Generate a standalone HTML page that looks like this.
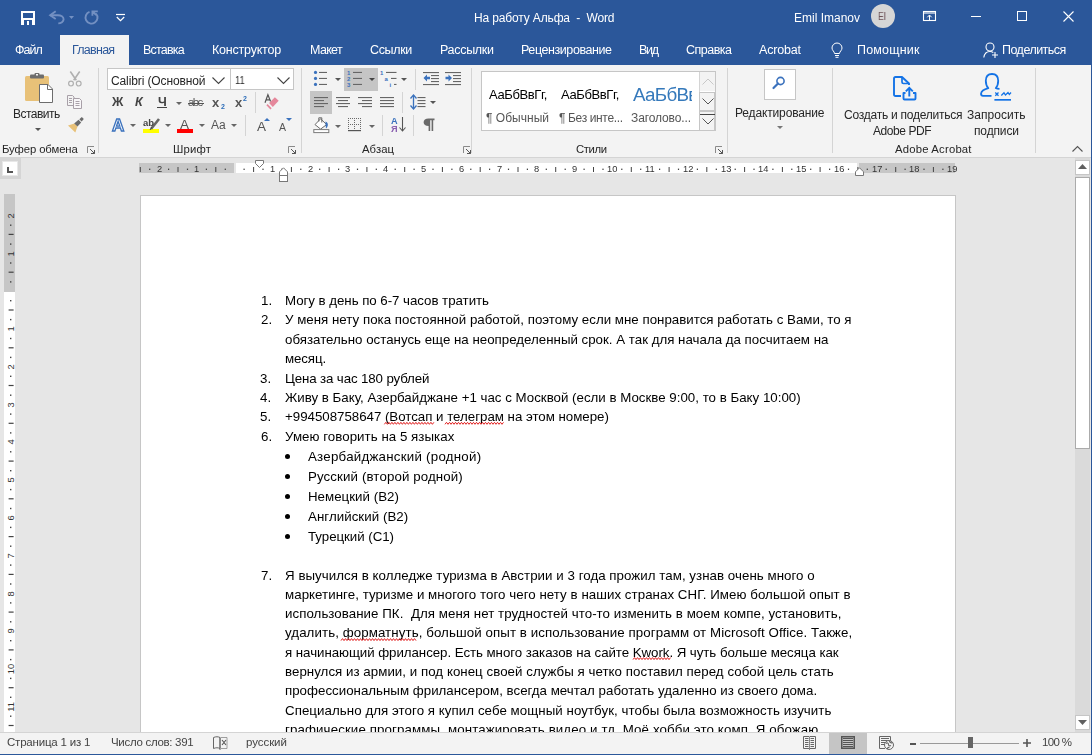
<!DOCTYPE html>
<html><head><meta charset="utf-8"><style>
html,body{margin:0;padding:0;}
body{width:1092px;height:755px;position:relative;overflow:hidden;background:#e6e6e6;font-family:"Liberation Sans", sans-serif;}
.t{position:absolute;white-space:pre;line-height:1;will-change:transform;}
svg{overflow:visible}
</style></head><body>

<div style="position:absolute;left:0px;top:0px;width:1092px;height:65px;background:#2b579a;"></div>
<div style="position:absolute;left:0px;top:65px;width:1092px;height:92px;background:#f3f3f3;"></div>
<div style="position:absolute;left:0px;top:157px;width:1092px;height:1px;background:#d4d4d4;"></div>
<div style="position:absolute;left:0px;top:732px;width:1092px;height:22px;background:#f3f3f3;z-index:10;"></div>
<div style="position:absolute;left:0px;top:732px;width:1092px;height:1px;background:#d4d4d4;z-index:10;"></div>
<div style="position:absolute;left:0px;top:754px;width:1092px;height:1px;background:#2b579a;z-index:10;"></div>
<div style="position:absolute;left:1091px;top:0px;width:1px;height:755px;background:#2b579a;z-index:10;"></div>
<svg style="position:absolute;left:21px;top:11px;z-index:4" width="14" height="14" viewBox="0 0 14 14"><path d="M0.5 0.5h13v13h-13z" fill="none" stroke="#fff" stroke-width="1"/><rect x="0" y="0" width="14" height="14" fill="#fff"/><rect x="2" y="2" width="10" height="5" fill="#2b579a"/><rect x="3" y="9" width="8" height="5" fill="#2b579a"/><rect x="6" y="10" width="2" height="4" fill="#fff"/></svg>
<svg style="position:absolute;left:48px;top:9px;z-index:4" width="18" height="17" viewBox="0 0 18 17"><path d="M7.7 2.3 L2.2 6.2 L7.7 10" fill="none" stroke="#7390c2" stroke-width="1.9"/><path d="M2.2 6.2 H9.8 C13 6.2 15.6 8 15.6 10.3 C15.6 12.5 13 14.4 10.3 14.4" fill="none" stroke="#7390c2" stroke-width="1.9"/></svg>
<svg style="position:absolute;left:69px;top:16px;z-index:4" width="5" height="3" viewBox="0 0 5 3"><path d="M0 0H5L2.5 3z" fill="#7390c2"/></svg>
<svg style="position:absolute;left:84px;top:10px;z-index:4" width="16" height="16" viewBox="0 0 16 16"><path d="M5.5 1.9 A6 6 0 1 0 12 3.6" fill="none" stroke="#7390c2" stroke-width="1.9"/><path d="M8.4 5.8 V1.3 H13.8 M8.6 1.5 L12.2 5" fill="none" stroke="#7390c2" stroke-width="1.8"/></svg>
<svg style="position:absolute;left:116px;top:13px;z-index:4" width="9" height="9" viewBox="0 0 9 9"><path d="M0 1.5H9" stroke="#fff" stroke-width="1.2"/><path d="M0.8 4 L4.5 7.7 L8.2 4" fill="none" stroke="#fff" stroke-width="1.2"/></svg>
<div style="position:absolute;left:871px;top:4px;width:24px;height:24px;border-radius:50%;background:#d6d6d6"></div>
<svg style="position:absolute;left:923px;top:11px;z-index:4" width="13" height="10" viewBox="0 0 13 10"><rect x="0.5" y="0.5" width="12" height="9" fill="none" stroke="#fff" stroke-width="1.1"/><path d="M0.5 2H12.5" stroke="#fff" stroke-width="1.1"/><path d="M6.5 9.5V4.2 M4.3 6.3 L6.5 4 L8.7 6.3" fill="none" stroke="#fff" stroke-width="1"/></svg>
<div style="position:absolute;left:971px;top:16px;width:10px;height:1px;background:#fff;"></div>
<div style="position:absolute;left:1017px;top:11px;width:8px;height:8px;border:1px solid #fff"></div>
<svg style="position:absolute;left:1063px;top:11px;z-index:4" width="11" height="11" viewBox="0 0 11 11"><path d="M0.5 0.5L10.5 10.5M10.5 0.5L0.5 10.5" stroke="#fff" stroke-width="1.1"/></svg>
<div style="position:absolute;left:60px;top:35px;width:69px;height:30px;background:#f3f3f3;"></div>
<svg style="position:absolute;left:831px;top:43px;z-index:4" width="12" height="15" viewBox="0 0 12 15"><path d="M3.5 10.5 C3.5 8.5 1 7.5 1 5 A5 5 0 0 1 11 5 C11 7.5 8.5 8.5 8.5 10.5 Z" fill="none" stroke="#fff" stroke-width="1"/><path d="M4 12.5H8 M4.5 14.3H7.5" stroke="#fff" stroke-width="1"/></svg>
<svg style="position:absolute;left:983px;top:42px;z-index:4" width="16" height="16" viewBox="0 0 16 16"><circle cx="7" cy="5" r="4" fill="none" stroke="#fff" stroke-width="1.1"/><path d="M0.8 15.5 C1.5 11 4 9.5 7 9.5 C8.5 9.5 9.5 10 10.3 10.5" fill="none" stroke="#fff" stroke-width="1.1"/><path d="M9 13H15 M12 10V16" stroke="#fff" stroke-width="1.1"/></svg>
<svg style="position:absolute;left:25px;top:73px;z-index:4" width="29" height="31" viewBox="0 0 29 31"><rect x="0" y="3" width="24" height="25" rx="1.5" fill="#e8c178"/><rect x="5" y="1.5" width="14" height="4" rx="1" fill="#6d6d6d"/><rect x="9.5" y="0" width="5" height="3" rx="1" fill="#6d6d6d"/><rect x="11" y="1" width="2" height="1.5" fill="#f3f3f3"/><path d="M14.5 11.5 H23 L27.5 16 V29.5 H14.5 Z" fill="#fff" stroke="#6d6d6d" stroke-width="1"/><path d="M22.5 11.5 V16.5 H27.5" fill="none" stroke="#6d6d6d" stroke-width="1"/></svg>
<svg style="position:absolute;left:35px;top:128px;z-index:4" width="6" height="3" viewBox="0 0 6 3"><path d="M0 0H6L3 3z" fill="#555"/></svg>
<svg style="position:absolute;left:68px;top:71px;z-index:4" width="14" height="16" viewBox="0 0 14 16"><path d="M2.3 0.5 L8.3 9.3 M11.7 0.5 L5.7 9.3" stroke="#b0b0b0" stroke-width="1.6"/><circle cx="3" cy="12.6" r="2.4" fill="none" stroke="#b0b0b0" stroke-width="1.2"/><circle cx="10.7" cy="12.6" r="2.4" fill="none" stroke="#b0b0b0" stroke-width="1.2"/></svg>
<svg style="position:absolute;left:67px;top:95px;z-index:4" width="16" height="14" viewBox="0 0 16 14"><path d="M0.5 0.5H5.5L7 2V10.5H0.5Z" fill="#f3f3f3" stroke="#a8a0a8" stroke-width="1"/><path d="M2 3.5H5M2 5.5H5M2 7.5H5" stroke="#a8a0a8" stroke-width="1"/><path d="M6.5 3.5H12.5L14.5 5.5V13.5H6.5Z" fill="#f8f6f8" stroke="#a8a0a8" stroke-width="1"/><path d="M8.5 6.5H12.5M8.5 8.5H12.5M8.5 10.5H12.5" stroke="#a8a0a8" stroke-width="1"/></svg>
<svg style="position:absolute;left:67px;top:117px;z-index:4" width="17" height="16" viewBox="0 0 17 16"><path d="M1 8.6 L7.5 6.5 L10.5 9.5 L8.3 15.5Z" fill="#e8c178"/><path d="M7.2 6.5 L11.5 2.8 L14.2 5.6 L10.5 9.5Z" fill="#6b6b6b"/><path d="M12.3 2.3 L14.8 0 L16.8 2 L14.6 4.6Z" fill="#6b6b6b"/></svg>
<svg style="position:absolute;left:87px;top:146px;z-index:4" width="8" height="8" viewBox="0 0 8 8"><path d="M0.5 7V0.5H7" fill="none" stroke="#8a8a8a" stroke-width="1"/><path d="M3 3L7.5 7.5M4 7.5H7.5V4" fill="none" stroke="#555" stroke-width="1"/></svg>
<div style="position:absolute;left:98px;top:68px;width:1px;height:85px;background:#d4d4d4;"></div>
<div style="position:absolute;left:107px;top:68px;width:122px;height:20px;border:1px solid #c6c6c6;background:#fff"></div>
<div style="position:absolute;left:230px;top:68px;width:62px;height:20px;border:1px solid #c6c6c6;background:#fff"></div>
<svg style="position:absolute;left:212px;top:77px;z-index:4" width="13" height="7" viewBox="0 0 13 7"><path d="M0.5 0.5L6.5 6.5L12.5 0.5" fill="none" stroke="#444" stroke-width="1.1"/></svg>
<svg style="position:absolute;left:277px;top:77px;z-index:4" width="13" height="7" viewBox="0 0 13 7"><path d="M0.5 0.5L6.5 6.5L12.5 0.5" fill="none" stroke="#444" stroke-width="1.1"/></svg>
<div style="position:absolute;left:157px;top:107px;width:10px;height:1.3px;background:#444;"></div>
<svg style="position:absolute;left:175.5px;top:101.5px;z-index:4" width="6" height="3" viewBox="0 0 6 3"><path d="M0 0H6L3 3z" fill="#666"/></svg>
<div style="position:absolute;left:188px;top:102.5px;width:16px;height:1px;background:#555;"></div>
<div style="position:absolute;left:255px;top:92px;width:1px;height:21px;background:#d4d4d4;"></div>
<svg style="position:absolute;left:264px;top:94px;z-index:4" width="16" height="16" viewBox="0 0 16 16"><path d="M1 8.8 L3.9 0.8 L6.6 7.5 M2.1 5.8 H6.3" fill="none" stroke="#555" stroke-width="1.2"/><path d="M5.1 9.1 L10.9 3.2 L14.7 6.7 L8.8 12.9Z" fill="#e5879b"/><path d="M2.4 11.2 L3.5 10 L7.7 14.3 L6.4 15.6Z" fill="#e5879b"/></svg>
<svg style="position:absolute;left:129.7px;top:124px;z-index:4" width="6" height="3" viewBox="0 0 6 3"><path d="M0 0H6L3 3z" fill="#666"/></svg>
<svg style="position:absolute;left:147px;top:117px;z-index:4" width="13" height="13" viewBox="0 0 13 13"><path d="M4 12 L12 2" stroke="#666" stroke-width="2.6"/><path d="M3 13 L5 10" stroke="#444" stroke-width="1"/></svg>
<div style="position:absolute;left:143px;top:129.2px;width:16px;height:3.7px;background:#ffff00;"></div>
<svg style="position:absolute;left:164.8px;top:124px;z-index:4" width="6" height="3" viewBox="0 0 6 3"><path d="M0 0H6L3 3z" fill="#666"/></svg>
<div style="position:absolute;left:176.7px;top:129.2px;width:16.5px;height:3.8px;background:#ff0000;"></div>
<svg style="position:absolute;left:199.2px;top:124px;z-index:4" width="6" height="3" viewBox="0 0 6 3"><path d="M0 0H6L3 3z" fill="#666"/></svg>
<svg style="position:absolute;left:230.8px;top:124px;z-index:4" width="6" height="3" viewBox="0 0 6 3"><path d="M0 0H6L3 3z" fill="#666"/></svg>
<div style="position:absolute;left:245px;top:115px;width:1px;height:21px;background:#d4d4d4;"></div>
<svg style="position:absolute;left:264px;top:118px;z-index:4" width="6" height="3" viewBox="0 0 6 3"><path d="M0 3H6L3 0z" fill="#3b72bd"/></svg>
<svg style="position:absolute;left:285.5px;top:118px;z-index:4" width="6" height="3" viewBox="0 0 6 3"><path d="M0 0H6L3 3z" fill="#3b72bd"/></svg>
<svg style="position:absolute;left:288px;top:146px;z-index:4" width="8" height="8" viewBox="0 0 8 8"><path d="M0.5 7V0.5H7" fill="none" stroke="#8a8a8a" stroke-width="1"/><path d="M3 3L7.5 7.5M4 7.5H7.5V4" fill="none" stroke="#555" stroke-width="1"/></svg>
<div style="position:absolute;left:301px;top:68px;width:1px;height:85px;background:#d4d4d4;"></div>
<div style="position:absolute;left:344px;top:68px;width:34px;height:23px;background:#c5c5c5;"></div>
<div style="position:absolute;left:310px;top:91px;width:22px;height:23px;background:#c5c5c5;"></div>
<svg style="position:absolute;left:313px;top:70px;z-index:4" width="15" height="17" viewBox="0 0 15 17"><circle cx="2.5" cy="2.4" r="1.6" fill="#3b72bd"/><rect x="6" y="1.9" width="8" height="1.1" fill="#666"/><circle cx="2.5" cy="8.4" r="1.6" fill="#3b72bd"/><rect x="6" y="7.9" width="8" height="1.1" fill="#666"/><circle cx="2.5" cy="14.4" r="1.6" fill="#3b72bd"/><rect x="6" y="13.9" width="8" height="1.1" fill="#666"/></svg>
<svg style="position:absolute;left:335px;top:78px;z-index:4" width="6" height="3" viewBox="0 0 6 3"><path d="M0 0H6L3 3z" fill="#555"/></svg>
<svg style="position:absolute;left:347px;top:70px;z-index:4" width="16" height="17" viewBox="0 0 16 17"><rect x="6" y="1.9" width="9" height="1.1" fill="#666"/><rect x="6" y="7.9" width="9" height="1.1" fill="#666"/><rect x="6" y="13.9" width="9" height="1.1" fill="#666"/><text x="0" y="5" font-family="Liberation Sans" font-weight="bold" font-size="6" fill="#3b72bd">1</text><text x="0" y="11" font-family="Liberation Sans" font-weight="bold" font-size="6" fill="#3b72bd">2</text><text x="0" y="17" font-family="Liberation Sans" font-weight="bold" font-size="6" fill="#3b72bd">3</text></svg>
<svg style="position:absolute;left:369px;top:78px;z-index:4" width="6" height="3" viewBox="0 0 6 3"><path d="M0 0H6L3 3z" fill="#444"/></svg>
<svg style="position:absolute;left:380px;top:70px;z-index:4" width="18" height="17" viewBox="0 0 18 17"><rect x="6" y="1.9" width="10.5" height="1.1" fill="#666"/><rect x="11" y="7.9" width="5.5" height="1.1" fill="#666"/><rect x="14" y="13.9" width="2.5" height="1.1" fill="#666"/><text x="0" y="5" font-family="Liberation Sans" font-weight="bold" font-size="6" fill="#3b72bd">1</text><text x="4.5" y="11" font-family="Liberation Sans" font-weight="bold" font-size="6" fill="#3b72bd">a</text><text x="9.5" y="17" font-family="Liberation Sans" font-weight="bold" font-size="6" fill="#3b72bd">i</text></svg>
<svg style="position:absolute;left:401px;top:78px;z-index:4" width="6" height="3" viewBox="0 0 6 3"><path d="M0 0H6L3 3z" fill="#555"/></svg>
<div style="position:absolute;left:415px;top:69px;width:1px;height:21px;background:#d4d4d4;"></div>
<svg style="position:absolute;left:423px;top:72px;z-index:4" width="17" height="13" viewBox="0 0 17 13"><rect x="0" y="0" width="16" height="1.1" fill="#666"/><rect x="8" y="3" width="8" height="1.1" fill="#666"/><rect x="8" y="6" width="8" height="1.1" fill="#666"/><rect x="8" y="9" width="8" height="1.1" fill="#666"/><rect x="0" y="12" width="16" height="1.1" fill="#666"/><path d="M0.5 6 L4 2.5 V4.8 H7 V7.2 H4 V9.5Z" fill="#3b72bd"/></svg>
<svg style="position:absolute;left:445px;top:72px;z-index:4" width="17" height="13" viewBox="0 0 17 13"><rect x="0" y="0" width="16" height="1.1" fill="#666"/><rect x="8" y="3" width="8" height="1.1" fill="#666"/><rect x="8" y="6" width="8" height="1.1" fill="#666"/><rect x="8" y="9" width="8" height="1.1" fill="#666"/><rect x="0" y="12" width="16" height="1.1" fill="#666"/><path d="M7 6 L3.5 2.5 V4.8 H0.5 V7.2 H3.5 V9.5Z" fill="#3b72bd"/></svg>
<svg style="position:absolute;left:314px;top:97px;z-index:4" width="14" height="11" viewBox="0 0 14 11"><rect x="0" y="0" width="14" height="1.1" fill="#666"/><rect x="0" y="3" width="10" height="1.1" fill="#666"/><rect x="0" y="6" width="14" height="1.1" fill="#666"/><rect x="0" y="9" width="10" height="1.1" fill="#666"/></svg>
<svg style="position:absolute;left:336px;top:97px;z-index:4" width="14" height="11" viewBox="0 0 14 11"><rect x="0.0" y="0" width="14" height="1.1" fill="#666"/><rect x="2.0" y="3" width="10" height="1.1" fill="#666"/><rect x="0.0" y="6" width="14" height="1.1" fill="#666"/><rect x="2.0" y="9" width="10" height="1.1" fill="#666"/></svg>
<svg style="position:absolute;left:358px;top:97px;z-index:4" width="14" height="11" viewBox="0 0 14 11"><rect x="0" y="0" width="14" height="1.1" fill="#666"/><rect x="4" y="3" width="10" height="1.1" fill="#666"/><rect x="0" y="6" width="14" height="1.1" fill="#666"/><rect x="4" y="9" width="10" height="1.1" fill="#666"/></svg>
<svg style="position:absolute;left:380px;top:97px;z-index:4" width="14" height="11" viewBox="0 0 14 11"><rect x="0" y="0" width="14" height="1.1" fill="#666"/><rect x="0" y="3" width="14" height="1.1" fill="#666"/><rect x="0" y="6" width="14" height="1.1" fill="#666"/><rect x="0" y="9" width="14" height="1.1" fill="#666"/></svg>
<div style="position:absolute;left:402px;top:92px;width:1px;height:21px;background:#d4d4d4;"></div>
<svg style="position:absolute;left:410px;top:94px;z-index:4" width="16" height="16" viewBox="0 0 16 16"><path d="M3.5 1.5V14.5" stroke="#3b72bd" stroke-width="1.3"/><path d="M0.5 4.5L3.5 1L6.5 4.5M0.5 11.5L3.5 15L6.5 11.5" fill="none" stroke="#3b72bd" stroke-width="1.3"/><rect x="7.5" y="3" width="8" height="1.1" fill="#666"/><rect x="7.5" y="6" width="8" height="1.1" fill="#666"/><rect x="7.5" y="9" width="8" height="1.1" fill="#666"/><rect x="7.5" y="12" width="8" height="1.1" fill="#666"/></svg>
<svg style="position:absolute;left:430px;top:101px;z-index:4" width="6" height="3" viewBox="0 0 6 3"><path d="M0 0H6L3 3z" fill="#555"/></svg>
<svg style="position:absolute;left:313px;top:117px;z-index:4" width="17" height="16" viewBox="0 0 17 16"><path d="M2 7.6 L7.6 1.8 L13.6 7.6 L7.6 12.1Z" fill="#fff" stroke="#6a6a6a" stroke-width="1"/><path d="M5.8 4.5 V0.8 H8.8 V5.5" fill="none" stroke="#6a6a6a" stroke-width="1"/><path d="M12.5 4.5 C15 5.5 16 8.5 13 11.5 L12.5 7.5Z" fill="#3b72bd"/><rect x="0.8" y="12.6" width="15" height="3" fill="#fff" stroke="#7a7a7a" stroke-width="1"/></svg>
<svg style="position:absolute;left:334.7px;top:124.5px;z-index:4" width="6" height="3" viewBox="0 0 6 3"><path d="M0 0H6L3 3z" fill="#666"/></svg>
<svg style="position:absolute;left:348px;top:118px;z-index:4" width="14" height="14" viewBox="0 0 14 14"><rect x="0" y="0" width="1" height="1" fill="#6a6a6a"/><rect x="2" y="0" width="1" height="1" fill="#6a6a6a"/><rect x="4" y="0" width="1" height="1" fill="#6a6a6a"/><rect x="6" y="0" width="1" height="1" fill="#6a6a6a"/><rect x="8" y="0" width="1" height="1" fill="#6a6a6a"/><rect x="10" y="0" width="1" height="1" fill="#6a6a6a"/><rect x="12" y="0" width="1" height="1" fill="#6a6a6a"/><rect x="0" y="2" width="1" height="1" fill="#6a6a6a"/><rect x="6" y="2" width="1" height="1" fill="#6a6a6a"/><rect x="12" y="2" width="1" height="1" fill="#6a6a6a"/><rect x="0" y="4" width="1" height="1" fill="#6a6a6a"/><rect x="6" y="4" width="1" height="1" fill="#6a6a6a"/><rect x="12" y="4" width="1" height="1" fill="#6a6a6a"/><rect x="0" y="6" width="1" height="1" fill="#6a6a6a"/><rect x="2" y="6" width="1" height="1" fill="#6a6a6a"/><rect x="4" y="6" width="1" height="1" fill="#6a6a6a"/><rect x="6" y="6" width="1" height="1" fill="#6a6a6a"/><rect x="8" y="6" width="1" height="1" fill="#6a6a6a"/><rect x="10" y="6" width="1" height="1" fill="#6a6a6a"/><rect x="12" y="6" width="1" height="1" fill="#6a6a6a"/><rect x="0" y="8" width="1" height="1" fill="#6a6a6a"/><rect x="6" y="8" width="1" height="1" fill="#6a6a6a"/><rect x="12" y="8" width="1" height="1" fill="#6a6a6a"/><rect x="0" y="10" width="1" height="1" fill="#6a6a6a"/><rect x="6" y="10" width="1" height="1" fill="#6a6a6a"/><rect x="12" y="10" width="1" height="1" fill="#6a6a6a"/><rect x="0" y="12" width="13" height="1.2" fill="#555"/></svg>
<svg style="position:absolute;left:368.7px;top:124.5px;z-index:4" width="6" height="3" viewBox="0 0 6 3"><path d="M0 0H6L3 3z" fill="#666"/></svg>
<div style="position:absolute;left:382px;top:115px;width:1px;height:21px;background:#d4d4d4;"></div>
<svg style="position:absolute;left:399px;top:117px;z-index:4" width="7" height="15" viewBox="0 0 7 15"><path d="M3.5 0V14" stroke="#555" stroke-width="1.1"/><path d="M0.5 10.5L3.5 14L6.5 10.5" fill="none" stroke="#555" stroke-width="1.1"/></svg>
<div style="position:absolute;left:413px;top:115px;width:1px;height:21px;background:#d4d4d4;"></div>
<svg style="position:absolute;left:423px;top:118px;z-index:4" width="12" height="13" viewBox="0 0 12 13"><path d="M5.5 0.5 H11.5 V2.2 H10.2 V13 H8.6 V2.2 H7.2 V13 H5.6 V8 C2.5 8 0.6 6.4 0.6 4.2 C0.6 1.9 2.5 0.5 5.5 0.5Z" fill="#6a6a6a"/></svg>
<svg style="position:absolute;left:463px;top:146px;z-index:4" width="8" height="8" viewBox="0 0 8 8"><path d="M0.5 7V0.5H7" fill="none" stroke="#8a8a8a" stroke-width="1"/><path d="M3 3L7.5 7.5M4 7.5H7.5V4" fill="none" stroke="#555" stroke-width="1"/></svg>
<div style="position:absolute;left:471px;top:68px;width:1px;height:85px;background:#d4d4d4;"></div>
<div style="position:absolute;left:481px;top:71px;width:233px;height:58px;border:1px solid #c6c6c6;background:#fff"></div>
<div style="position:absolute;left:699px;top:72px;width:1px;height:58px;background:#d4d4d4;"></div>
<div style="position:absolute;left:699px;top:92px;width:14px;height:17px;border:1px solid #c6c6c6;background:#f3f3f3"></div>
<div style="position:absolute;left:699px;top:111px;width:14px;height:18px;border:1px solid #c6c6c6;background:#f3f3f3"></div>
<div style="position:absolute;left:700px;top:72px;width:15px;height:19px;background:#f3f3f3;"></div>
<svg style="position:absolute;left:702px;top:78px;z-index:4" width="12" height="7" viewBox="0 0 12 7"><path d="M0.5 6.5L6 1L11.5 6.5" fill="none" stroke="#c8c8c8" stroke-width="1"/></svg>
<svg style="position:absolute;left:702px;top:98px;z-index:4" width="12" height="7" viewBox="0 0 12 7"><path d="M0.5 0.5L6 6L11.5 0.5" fill="none" stroke="#555" stroke-width="1"/></svg>
<div style="position:absolute;left:700px;top:114px;width:15px;height:1px;background:#444;"></div>
<svg style="position:absolute;left:702px;top:118px;z-index:4" width="12" height="7" viewBox="0 0 12 7"><path d="M0.5 0.5L6 6L11.5 0.5" fill="none" stroke="#555" stroke-width="1"/></svg>
<svg style="position:absolute;left:715px;top:146px;z-index:4" width="8" height="8" viewBox="0 0 8 8"><path d="M0.5 7V0.5H7" fill="none" stroke="#8a8a8a" stroke-width="1"/><path d="M3 3L7.5 7.5M4 7.5H7.5V4" fill="none" stroke="#555" stroke-width="1"/></svg>
<div style="position:absolute;left:727px;top:68px;width:1px;height:85px;background:#d4d4d4;"></div>
<div style="position:absolute;left:764px;top:69px;width:30px;height:29px;border:1px solid #c6c6c6;background:#fff"></div>
<svg style="position:absolute;left:772px;top:76px;z-index:4" width="14" height="13" viewBox="0 0 14 13"><circle cx="8.5" cy="5" r="3.6" fill="none" stroke="#3b72bd" stroke-width="1.6"/><path d="M6 7.5L1.5 12" stroke="#3b72bd" stroke-width="2.2" stroke-linecap="round"/></svg>
<svg style="position:absolute;left:777px;top:126px;z-index:4" width="6" height="3" viewBox="0 0 6 3"><path d="M0 0H6L3 3z" fill="#777"/></svg>
<div style="position:absolute;left:832px;top:68px;width:1px;height:85px;background:#d4d4d4;"></div>
<svg style="position:absolute;left:893px;top:76px;z-index:4" width="24" height="25" viewBox="0 0 24 25"><path d="M8 20 H2.5 Q1 20 1 18.5 V2.5 Q1 1 2.5 1 H9 L16 7.5 V9" fill="none" stroke="#1473e6" stroke-width="1.9" stroke-linejoin="round"/><path d="M9 1 V6 Q9 7.5 10.5 7.5 H16" fill="none" stroke="#1473e6" stroke-width="1.7"/><path d="M12.5 17 H10.5 V22.5 Q10.5 23.5 11.5 23.5 H21.5 Q22.5 23.5 22.5 22.5 V17 H20" fill="none" stroke="#1473e6" stroke-width="1.9" stroke-linejoin="round"/><path d="M16.3 20.5 V12.5 M12.8 15.3 L16.3 11.8 L19.8 15.3" fill="none" stroke="#1473e6" stroke-width="1.9"/></svg>
<svg style="position:absolute;left:980px;top:73px;z-index:4" width="33" height="28" viewBox="0 0 33 28"><path d="M11.5 22.8 H3 Q1 22.8 1 20.8 Q1.5 17 8.3 15.2 Q5.8 12.5 5.8 7.8 Q5.8 1 12 1 Q18.2 1 18.2 7.8 Q18.2 12.5 15.8 15 Q17 15.8 19.5 15.8" fill="none" stroke="#1473e6" stroke-width="1.8" stroke-linejoin="round"/><path d="M15.3 19.5L18.5 22.7M18.5 19.5L15.3 22.7" stroke="#1473e6" stroke-width="1.3"/><path d="M21.3 22.5 L24 19.8 L25.5 22 L28 19.5 L29.3 21.5 L31 19.5" fill="none" stroke="#1473e6" stroke-width="1.3"/><rect x="14.4" y="26" width="16.6" height="1.7" fill="#1473e6"/></svg>
<div style="position:absolute;left:1035px;top:68px;width:1px;height:85px;background:#d4d4d4;"></div>
<svg style="position:absolute;left:1072px;top:146px;z-index:4" width="11" height="6" viewBox="0 0 11 6"><path d="M0.5 5.5L5.5 0.5L10.5 5.5" fill="none" stroke="#555" stroke-width="1.1"/></svg>
<div style="position:absolute;left:0px;top:158px;width:21px;height:21px;background:#d5d5d5;"></div>
<div style="position:absolute;left:2px;top:161px;width:14px;height:13px;background:#fff;border:1px solid #e8e8e8"></div>
<svg style="position:absolute;left:7px;top:167px;z-index:4" width="6" height="6" viewBox="0 0 6 6"><path d="M1 0V5H6" fill="none" stroke="#555" stroke-width="2"/></svg>
<div style="position:absolute;left:139px;top:163px;width:95px;height:10px;background:#c6c6c6;"></div>
<div style="position:absolute;left:236px;top:163px;width:621px;height:10px;background:#ffffff;"></div>
<div style="position:absolute;left:859px;top:163px;width:96px;height:10px;background:#c6c6c6;"></div>
<svg style="position:absolute;left:0;top:0;z-index:4" width="1092" height="200"><rect x="139.8" y="167" width="1" height="5" fill="#444"/><rect x="149.1" y="168.6" width="1.2" height="1.4" fill="#444"/><rect x="168.0" y="168.6" width="1.2" height="1.4" fill="#444"/><rect x="177.5" y="167" width="1" height="5" fill="#444"/><rect x="186.9" y="168.6" width="1.2" height="1.4" fill="#444"/><rect x="205.8" y="168.6" width="1.2" height="1.4" fill="#444"/><rect x="215.3" y="167" width="1" height="5" fill="#444"/><rect x="224.7" y="168.6" width="1.2" height="1.4" fill="#444"/><rect x="243.5" y="168.6" width="1.2" height="1.4" fill="#444"/><rect x="253.1" y="167" width="1" height="5" fill="#444"/><rect x="262.4" y="168.6" width="1.2" height="1.4" fill="#444"/><rect x="281.3" y="168.6" width="1.2" height="1.4" fill="#444"/><rect x="290.9" y="167" width="1" height="5" fill="#444"/><rect x="300.2" y="168.6" width="1.2" height="1.4" fill="#444"/><rect x="319.1" y="168.6" width="1.2" height="1.4" fill="#444"/><rect x="328.6" y="167" width="1" height="5" fill="#444"/><rect x="338.0" y="168.6" width="1.2" height="1.4" fill="#444"/><rect x="356.9" y="168.6" width="1.2" height="1.4" fill="#444"/><rect x="366.4" y="167" width="1" height="5" fill="#444"/><rect x="375.7" y="168.6" width="1.2" height="1.4" fill="#444"/><rect x="394.6" y="168.6" width="1.2" height="1.4" fill="#444"/><rect x="404.2" y="167" width="1" height="5" fill="#444"/><rect x="413.5" y="168.6" width="1.2" height="1.4" fill="#444"/><rect x="432.4" y="168.6" width="1.2" height="1.4" fill="#444"/><rect x="441.9" y="167" width="1" height="5" fill="#444"/><rect x="451.3" y="168.6" width="1.2" height="1.4" fill="#444"/><rect x="470.2" y="168.6" width="1.2" height="1.4" fill="#444"/><rect x="479.7" y="167" width="1" height="5" fill="#444"/><rect x="489.0" y="168.6" width="1.2" height="1.4" fill="#444"/><rect x="507.9" y="168.6" width="1.2" height="1.4" fill="#444"/><rect x="517.5" y="167" width="1" height="5" fill="#444"/><rect x="526.8" y="168.6" width="1.2" height="1.4" fill="#444"/><rect x="545.7" y="168.6" width="1.2" height="1.4" fill="#444"/><rect x="555.2" y="167" width="1" height="5" fill="#444"/><rect x="564.6" y="168.6" width="1.2" height="1.4" fill="#444"/><rect x="583.5" y="168.6" width="1.2" height="1.4" fill="#444"/><rect x="593.0" y="167" width="1" height="5" fill="#444"/><rect x="602.4" y="168.6" width="1.2" height="1.4" fill="#444"/><rect x="621.2" y="168.6" width="1.2" height="1.4" fill="#444"/><rect x="630.8" y="167" width="1" height="5" fill="#444"/><rect x="640.1" y="168.6" width="1.2" height="1.4" fill="#444"/><rect x="659.0" y="168.6" width="1.2" height="1.4" fill="#444"/><rect x="668.6" y="167" width="1" height="5" fill="#444"/><rect x="677.9" y="168.6" width="1.2" height="1.4" fill="#444"/><rect x="696.8" y="168.6" width="1.2" height="1.4" fill="#444"/><rect x="706.3" y="167" width="1" height="5" fill="#444"/><rect x="715.7" y="168.6" width="1.2" height="1.4" fill="#444"/><rect x="734.6" y="168.6" width="1.2" height="1.4" fill="#444"/><rect x="744.1" y="167" width="1" height="5" fill="#444"/><rect x="753.4" y="168.6" width="1.2" height="1.4" fill="#444"/><rect x="772.3" y="168.6" width="1.2" height="1.4" fill="#444"/><rect x="781.9" y="167" width="1" height="5" fill="#444"/><rect x="791.2" y="168.6" width="1.2" height="1.4" fill="#444"/><rect x="810.1" y="168.6" width="1.2" height="1.4" fill="#444"/><rect x="819.6" y="167" width="1" height="5" fill="#444"/><rect x="829.0" y="168.6" width="1.2" height="1.4" fill="#444"/><rect x="847.9" y="168.6" width="1.2" height="1.4" fill="#444"/><rect x="857.4" y="167" width="1" height="5" fill="#444"/><rect x="866.7" y="168.6" width="1.2" height="1.4" fill="#444"/><rect x="885.6" y="168.6" width="1.2" height="1.4" fill="#444"/><rect x="895.2" y="167" width="1" height="5" fill="#444"/><rect x="904.5" y="168.6" width="1.2" height="1.4" fill="#444"/><rect x="923.4" y="168.6" width="1.2" height="1.4" fill="#444"/><rect x="932.9" y="167" width="1" height="5" fill="#444"/><rect x="942.3" y="168.6" width="1.2" height="1.4" fill="#444"/></svg>
<svg style="position:absolute;left:255px;top:160px;z-index:4" width="9" height="9" viewBox="0 0 9 9"><path d="M0.5 0.5H8.5V3.5L4.5 7.5L0.5 3.5Z" fill="#fff" stroke="#777" stroke-width="1"/></svg>
<svg style="position:absolute;left:279px;top:167px;z-index:4" width="9" height="15" viewBox="0 0 9 15"><path d="M0.5 8.5V4.8L4.5 0.8L8.5 4.8V8.5Z" fill="#fff" stroke="#777" stroke-width="1"/><rect x="0.5" y="8.5" width="8" height="6" fill="#fff" stroke="#777" stroke-width="1"/></svg>
<svg style="position:absolute;left:855px;top:167px;z-index:4" width="9" height="9" viewBox="0 0 9 9"><path d="M0.5 8.5V4.8L4.5 0.8L8.5 4.8V8.5Z" fill="#fff" stroke="#777" stroke-width="1"/></svg>
<div style="position:absolute;left:4px;top:194px;width:11px;height:98px;background:#c6c6c6;"></div>
<div style="position:absolute;left:4px;top:292px;width:11px;height:440px;background:#ffffff;"></div>
<svg style="position:absolute;left:0;top:0;z-index:4" width="30" height="755"><rect x="10" y="224.5" width="1.4" height="1.4" fill="#444"/><rect x="8.6" y="233.8" width="5" height="1.2" fill="#444"/><rect x="10" y="243.4" width="1.4" height="1.4" fill="#444"/><rect x="10" y="262.3" width="1.4" height="1.4" fill="#444"/><rect x="8.6" y="271.6" width="5" height="1.2" fill="#444"/><rect x="10" y="281.2" width="1.4" height="1.4" fill="#444"/><rect x="10" y="300.0" width="1.4" height="1.4" fill="#444"/><rect x="8.6" y="309.4" width="5" height="1.2" fill="#444"/><rect x="10" y="318.9" width="1.4" height="1.4" fill="#444"/><rect x="10" y="337.8" width="1.4" height="1.4" fill="#444"/><rect x="8.6" y="347.2" width="5" height="1.2" fill="#444"/><rect x="10" y="356.7" width="1.4" height="1.4" fill="#444"/><rect x="10" y="375.6" width="1.4" height="1.4" fill="#444"/><rect x="8.6" y="384.9" width="5" height="1.2" fill="#444"/><rect x="10" y="394.5" width="1.4" height="1.4" fill="#444"/><rect x="10" y="413.4" width="1.4" height="1.4" fill="#444"/><rect x="8.6" y="422.7" width="5" height="1.2" fill="#444"/><rect x="10" y="432.2" width="1.4" height="1.4" fill="#444"/><rect x="10" y="451.1" width="1.4" height="1.4" fill="#444"/><rect x="8.6" y="460.5" width="5" height="1.2" fill="#444"/><rect x="10" y="470.0" width="1.4" height="1.4" fill="#444"/><rect x="10" y="488.9" width="1.4" height="1.4" fill="#444"/><rect x="8.6" y="498.2" width="5" height="1.2" fill="#444"/><rect x="10" y="507.8" width="1.4" height="1.4" fill="#444"/><rect x="10" y="526.7" width="1.4" height="1.4" fill="#444"/><rect x="8.6" y="536.0" width="5" height="1.2" fill="#444"/><rect x="10" y="545.5" width="1.4" height="1.4" fill="#444"/><rect x="10" y="564.4" width="1.4" height="1.4" fill="#444"/><rect x="8.6" y="573.8" width="5" height="1.2" fill="#444"/><rect x="10" y="583.3" width="1.4" height="1.4" fill="#444"/><rect x="10" y="602.2" width="1.4" height="1.4" fill="#444"/><rect x="8.6" y="611.5" width="5" height="1.2" fill="#444"/><rect x="10" y="621.1" width="1.4" height="1.4" fill="#444"/><rect x="10" y="640.0" width="1.4" height="1.4" fill="#444"/><rect x="8.6" y="649.3" width="5" height="1.2" fill="#444"/><rect x="10" y="658.9" width="1.4" height="1.4" fill="#444"/><rect x="10" y="677.7" width="1.4" height="1.4" fill="#444"/><rect x="8.6" y="687.1" width="5" height="1.2" fill="#444"/><rect x="10" y="696.6" width="1.4" height="1.4" fill="#444"/><rect x="10" y="715.5" width="1.4" height="1.4" fill="#444"/><rect x="8.6" y="724.9" width="5" height="1.2" fill="#444"/></svg>
<div style="position:absolute;left:-9.5px;top:209.8px;width:40px;height:12px;line-height:12px;text-align:center;font-size:9.3px;color:#333;transform:rotate(-90deg);z-index:5">2</div>
<div style="position:absolute;left:-9.5px;top:247.5px;width:40px;height:12px;line-height:12px;text-align:center;font-size:9.3px;color:#333;transform:rotate(-90deg);z-index:5">1</div>
<div style="position:absolute;left:-9.5px;top:323.1px;width:40px;height:12px;line-height:12px;text-align:center;font-size:9.3px;color:#333;transform:rotate(-90deg);z-index:5">1</div>
<div style="position:absolute;left:-9.5px;top:360.8px;width:40px;height:12px;line-height:12px;text-align:center;font-size:9.3px;color:#333;transform:rotate(-90deg);z-index:5">2</div>
<div style="position:absolute;left:-9.5px;top:398.6px;width:40px;height:12px;line-height:12px;text-align:center;font-size:9.3px;color:#333;transform:rotate(-90deg);z-index:5">3</div>
<div style="position:absolute;left:-9.5px;top:436.4px;width:40px;height:12px;line-height:12px;text-align:center;font-size:9.3px;color:#333;transform:rotate(-90deg);z-index:5">4</div>
<div style="position:absolute;left:-9.5px;top:474.2px;width:40px;height:12px;line-height:12px;text-align:center;font-size:9.3px;color:#333;transform:rotate(-90deg);z-index:5">5</div>
<div style="position:absolute;left:-9.5px;top:511.9px;width:40px;height:12px;line-height:12px;text-align:center;font-size:9.3px;color:#333;transform:rotate(-90deg);z-index:5">6</div>
<div style="position:absolute;left:-9.5px;top:549.7px;width:40px;height:12px;line-height:12px;text-align:center;font-size:9.3px;color:#333;transform:rotate(-90deg);z-index:5">7</div>
<div style="position:absolute;left:-9.5px;top:587.5px;width:40px;height:12px;line-height:12px;text-align:center;font-size:9.3px;color:#333;transform:rotate(-90deg);z-index:5">8</div>
<div style="position:absolute;left:-9.5px;top:625.2px;width:40px;height:12px;line-height:12px;text-align:center;font-size:9.3px;color:#333;transform:rotate(-90deg);z-index:5">9</div>
<div style="position:absolute;left:-9.5px;top:663.0px;width:40px;height:12px;line-height:12px;text-align:center;font-size:9.3px;color:#333;transform:rotate(-90deg);z-index:5">10</div>
<div style="position:absolute;left:-9.5px;top:700.8px;width:40px;height:12px;line-height:12px;text-align:center;font-size:9.3px;color:#333;transform:rotate(-90deg);z-index:5">11</div>
<div style="position:absolute;left:140px;top:195px;width:814px;height:600px;background:#fff;border:1px solid #c6c6c6;z-index:1"></div>
<div style="position:absolute;left:1075px;top:158px;width:15px;height:574px;background:#dadada;"></div>
<div style="position:absolute;left:1075px;top:160px;width:13px;height:13px;background:#fff;border:1px solid #c6c6c6"></div>
<svg style="position:absolute;left:1078px;top:164px;z-index:4" width="9" height="5" viewBox="0 0 9 5"><path d="M0 5H9L4.5 0z" fill="#606060"/></svg>
<div style="position:absolute;left:1075px;top:177px;width:13px;height:270px;background:#fff;border:1px solid #ababab"></div>
<div style="position:absolute;left:1075px;top:715px;width:13px;height:13px;background:#fff;border:1px solid #c6c6c6"></div>
<svg style="position:absolute;left:1078px;top:720px;z-index:4" width="9" height="5" viewBox="0 0 9 5"><path d="M0 0H9L4.5 5z" fill="#606060"/></svg>
<div style="position:absolute;left:284.7px;top:454.3px;width:5px;height:5px;border-radius:50%;background:#000;z-index:6"></div>
<div style="position:absolute;left:284.7px;top:474.3px;width:5px;height:5px;border-radius:50%;background:#000;z-index:6"></div>
<div style="position:absolute;left:284.7px;top:494.3px;width:5px;height:5px;border-radius:50%;background:#000;z-index:6"></div>
<div style="position:absolute;left:284.7px;top:514.3px;width:5px;height:5px;border-radius:50%;background:#000;z-index:6"></div>
<div style="position:absolute;left:284.7px;top:534.3px;width:5px;height:5px;border-radius:50%;background:#000;z-index:6"></div>
<svg style="position:absolute;left:0px;top:0px;z-index:7" width="1" height="1" viewBox="0 0 1 1"><path d="M384.4 424.3 L385.9 422.3 L387.4 424.3 L388.9 422.3 L390.4 424.3 L391.9 422.3 L393.4 424.3 L394.9 422.3 L396.4 424.3 L397.9 422.3 L399.4 424.3 L400.9 422.3 L402.4 424.3 L403.9 422.3 L405.4 424.3 L406.9 422.3 L408.4 424.3 L409.9 422.3 L411.4 424.3 L412.9 422.3 L414.4 424.3 L415.9 422.3 L417.4 424.3 L418.9 422.3 L420.4 424.3 L421.9 422.3 L423.4 424.3 L424.9 422.3 L426.4 424.3 L427.9 422.3 L429.4 424.3 L430.9 422.3 L432.4 424.3 L433.9 422.3" fill="none" stroke="#e02020" stroke-width="1"/></svg>
<svg style="position:absolute;left:0px;top:0px;z-index:7" width="1" height="1" viewBox="0 0 1 1"><path d="M445.0 424.3 L446.5 422.3 L448.0 424.3 L449.5 422.3 L451.0 424.3 L452.5 422.3 L454.0 424.3 L455.5 422.3 L457.0 424.3 L458.5 422.3 L460.0 424.3 L461.5 422.3 L463.0 424.3 L464.5 422.3 L466.0 424.3 L467.5 422.3 L469.0 424.3 L470.5 422.3 L472.0 424.3 L473.5 422.3 L475.0 424.3 L476.5 422.3 L478.0 424.3 L479.5 422.3 L481.0 424.3 L482.5 422.3 L484.0 424.3 L485.5 422.3 L487.0 424.3 L488.5 422.3 L490.0 424.3 L491.5 422.3 L493.0 424.3 L494.5 422.3 L496.0 424.3 L497.5 422.3 L499.0 424.3 L500.5 422.3 L502.0 424.3 L503.5 422.3" fill="none" stroke="#e02020" stroke-width="1"/></svg>
<svg style="position:absolute;left:0px;top:0px;z-index:7" width="1" height="1" viewBox="0 0 1 1"><path d="M341.0 640.6 L342.5 638.6 L344.0 640.6 L345.5 638.6 L347.0 640.6 L348.5 638.6 L350.0 640.6 L351.5 638.6 L353.0 640.6 L354.5 638.6 L356.0 640.6 L357.5 638.6 L359.0 640.6 L360.5 638.6 L362.0 640.6 L363.5 638.6 L365.0 640.6 L366.5 638.6 L368.0 640.6 L369.5 638.6 L371.0 640.6 L372.5 638.6 L374.0 640.6 L375.5 638.6 L377.0 640.6 L378.5 638.6 L380.0 640.6 L381.5 638.6 L383.0 640.6 L384.5 638.6 L386.0 640.6 L387.5 638.6 L389.0 640.6 L390.5 638.6 L392.0 640.6 L393.5 638.6 L395.0 640.6 L396.5 638.6 L398.0 640.6 L399.5 638.6 L401.0 640.6 L402.5 638.6 L404.0 640.6 L405.5 638.6 L407.0 640.6 L408.5 638.6 L410.0 640.6 L411.5 638.6 L413.0 640.6 L414.5 638.6 L416.0 640.6" fill="none" stroke="#e02020" stroke-width="1"/></svg>
<svg style="position:absolute;left:0px;top:0px;z-index:7" width="1" height="1" viewBox="0 0 1 1"><path d="M633.0 659.6 L634.5 657.6 L636.0 659.6 L637.5 657.6 L639.0 659.6 L640.5 657.6 L642.0 659.6 L643.5 657.6 L645.0 659.6 L646.5 657.6 L648.0 659.6 L649.5 657.6 L651.0 659.6 L652.5 657.6 L654.0 659.6 L655.5 657.6 L657.0 659.6 L658.5 657.6 L660.0 659.6 L661.5 657.6 L663.0 659.6 L664.5 657.6 L666.0 659.6 L667.5 657.6 L669.0 659.6 L670.5 657.6" fill="none" stroke="#e02020" stroke-width="1"/></svg>
<svg style="position:absolute;left:213px;top:736px;z-index:11" width="15" height="14" viewBox="0 0 15 14"><path d="M0.5 1.5 C3 0.5 5 0.5 7 1.5 V12.5 C5 11.5 3 11.5 0.5 12.5Z" fill="none" stroke="#666" stroke-width="1"/><path d="M7 1.5 V12.5 M7 12.5 L7 14" stroke="#666" stroke-width="1"/><path d="M9 4 L13 9 M13 4 L9 9" stroke="#555" stroke-width="1.1"/><path d="M8 1.5H14V12.5H8" fill="none" stroke="#888" stroke-width="0.8"/></svg>
<div style="position:absolute;left:829px;top:733px;width:38px;height:21px;background:#c5c5c5;z-index:10;"></div>
<svg style="position:absolute;left:803px;top:736px;z-index:11" width="14" height="14" viewBox="0 0 14 14"><path d="M0.5 0.5H6L6.5 1L7 0.5H12.5V12.5H7L6.5 13L6 12.5H0.5Z" fill="none" stroke="#666" stroke-width="1"/><rect x="2" y="2" width="3.5" height="1" fill="#666"/><rect x="7.5" y="2" width="3.5" height="1" fill="#666"/><rect x="2" y="4" width="3.5" height="1" fill="#666"/><rect x="7.5" y="4" width="3.5" height="1" fill="#666"/><rect x="2" y="6" width="3.5" height="1" fill="#666"/><rect x="7.5" y="6" width="3.5" height="1" fill="#666"/><rect x="2" y="8" width="3.5" height="1" fill="#666"/><rect x="7.5" y="8" width="3.5" height="1" fill="#666"/><rect x="2" y="10" width="3.5" height="1" fill="#666"/><rect x="7.5" y="10" width="3.5" height="1" fill="#666"/><rect x="6" y="1" width="1" height="13" fill="#888"/></svg>
<svg style="position:absolute;left:841px;top:736px;z-index:11" width="14" height="13" viewBox="0 0 14 13"><rect x="0.75" y="0.75" width="12.5" height="11.5" fill="none" stroke="#555" stroke-width="1.5"/><rect x="2" y="2" width="10" height="1" fill="#555"/><rect x="2" y="4" width="10" height="1" fill="#555"/><rect x="2" y="6" width="10" height="1" fill="#555"/><rect x="2" y="8" width="10" height="1" fill="#555"/><rect x="2" y="10" width="10" height="1" fill="#555"/></svg>
<svg style="position:absolute;left:879px;top:736px;z-index:11" width="15" height="15" viewBox="0 0 15 15"><path d="M6 12.5H0.5V0.5H11.5V5" fill="none" stroke="#666" stroke-width="1"/><rect x="2" y="2" width="8" height="1" fill="#666"/><rect x="2" y="4" width="8" height="1" fill="#666"/><rect x="2" y="6" width="4" height="1" fill="#666"/><rect x="2" y="8" width="4" height="1" fill="#666"/><circle cx="10" cy="9" r="4.5" fill="#f3f3f3" stroke="#666" stroke-width="1"/><path d="M7 7.5 C8 6.5 9.5 7 9.5 8.5 C9.5 10 11 10 12 9.5 M10.5 5 C10.5 6.5 12 7 13.5 7 M8.5 13 C8.5 11.5 9.5 11 10.5 11.5" fill="none" stroke="#666" stroke-width="1.2"/></svg>
<div style="position:absolute;left:910px;top:743px;width:6px;height:1.6px;background:#555;z-index:11;"></div>
<div style="position:absolute;left:920px;top:743px;width:99px;height:1px;background:#999;z-index:11;"></div>
<div style="position:absolute;left:968px;top:737px;width:5px;height:11px;background:#666;z-index:11;"></div>
<svg style="position:absolute;left:1023px;top:739px;z-index:11" width="8" height="8" viewBox="0 0 8 8"><path d="M0 4H8M4 0V8" stroke="#555" stroke-width="1.6"/></svg>
<div class="t" style="left:474.00px;top:11.90px;font-size:12px;color:#ffffff;font-weight:normal;font-style:normal;letter-spacing:-0.146px;z-index:5;">На работу Альфа  -  Word</div>
<div class="t" style="left:794.00px;top:11.90px;font-size:12px;color:#ffffff;font-weight:normal;font-style:normal;letter-spacing:-0.003px;z-index:5;">Emil Imanov</div>
<div class="t" style="left:878.30px;top:11.25px;font-size:11px;color:#6e5358;font-weight:normal;font-style:normal;letter-spacing:0.000px;z-index:6;transform:scaleX(0.78);transform-origin:0 0;">EI</div>
<div class="t" style="left:14.60px;top:44.27px;font-size:12.5px;color:#ffffff;font-weight:normal;font-style:normal;letter-spacing:-1.011px;z-index:5;">Файл</div>
<div class="t" style="left:72.30px;top:44.27px;font-size:12.5px;color:#2b579a;font-weight:normal;font-style:normal;letter-spacing:-0.746px;z-index:5;">Главная</div>
<div class="t" style="left:143.00px;top:44.27px;font-size:12.5px;color:#ffffff;font-weight:normal;font-style:normal;letter-spacing:-0.811px;z-index:5;">Вставка</div>
<div class="t" style="left:212.30px;top:44.27px;font-size:12.5px;color:#ffffff;font-weight:normal;font-style:normal;letter-spacing:-0.208px;z-index:5;">Конструктор</div>
<div class="t" style="left:309.60px;top:44.27px;font-size:12.5px;color:#ffffff;font-weight:normal;font-style:normal;letter-spacing:-0.673px;z-index:5;">Макет</div>
<div class="t" style="left:370.00px;top:44.27px;font-size:12.5px;color:#ffffff;font-weight:normal;font-style:normal;letter-spacing:-0.343px;z-index:5;">Ссылки</div>
<div class="t" style="left:440.00px;top:44.27px;font-size:12.5px;color:#ffffff;font-weight:normal;font-style:normal;letter-spacing:-0.301px;z-index:5;">Рассылки</div>
<div class="t" style="left:521.00px;top:44.27px;font-size:12.5px;color:#ffffff;font-weight:normal;font-style:normal;letter-spacing:-0.425px;z-index:5;">Рецензирование</div>
<div class="t" style="left:639.00px;top:44.27px;font-size:12.5px;color:#ffffff;font-weight:normal;font-style:normal;letter-spacing:-1.312px;z-index:5;">Вид</div>
<div class="t" style="left:686.00px;top:44.27px;font-size:12.5px;color:#ffffff;font-weight:normal;font-style:normal;letter-spacing:-0.508px;z-index:5;">Справка</div>
<div class="t" style="left:759.00px;top:44.27px;font-size:12.5px;color:#ffffff;font-weight:normal;font-style:normal;letter-spacing:-0.182px;z-index:5;">Acrobat</div>
<div class="t" style="left:856.60px;top:44.27px;font-size:12.5px;color:#ffffff;font-weight:normal;font-style:normal;letter-spacing:0.182px;z-index:5;">Помощник</div>
<div class="t" style="left:1002.30px;top:44.27px;font-size:12.5px;color:#ffffff;font-weight:normal;font-style:normal;letter-spacing:-0.526px;z-index:5;">Поделиться</div>
<div class="t" style="left:13.40px;top:108.20px;font-size:12px;color:#262626;font-weight:normal;font-style:normal;letter-spacing:-0.511px;z-index:5;">Вставить</div>
<div class="t" style="left:2.40px;top:143.70px;font-size:11.3px;color:#262626;font-weight:normal;font-style:normal;letter-spacing:-0.088px;z-index:5;">Буфер обмена</div>
<div class="t" style="left:110.50px;top:74.60px;font-size:12px;color:#262626;font-weight:normal;font-style:normal;letter-spacing:-0.116px;z-index:5;">Calibri (Основной</div>
<div class="t" style="left:235.00px;top:75.02px;font-size:11.5px;color:#262626;font-weight:normal;font-style:normal;letter-spacing:0.000px;z-index:5;transform:scaleX(0.82);transform-origin:0 0;">11</div>
<div class="t" style="left:111.60px;top:96.17px;font-size:12.5px;color:#444;font-weight:bold;font-style:normal;letter-spacing:0.000px;z-index:5;">Ж</div>
<div class="t" style="left:135.00px;top:96.17px;font-size:12.5px;color:#444;font-weight:bold;font-style:italic;letter-spacing:0.000px;z-index:5;">К</div>
<div class="t" style="left:157.50px;top:96.17px;font-size:12.5px;color:#444;font-weight:bold;font-style:normal;letter-spacing:0.000px;z-index:5;">Ч</div>
<div class="t" style="left:188.20px;top:96.82px;font-size:11.5px;color:#555;font-weight:normal;font-style:normal;letter-spacing:-1.623px;z-index:5;">abc</div>
<div class="t" style="left:212.40px;top:95.75px;font-size:13px;color:#555;font-weight:bold;font-style:normal;letter-spacing:0.000px;z-index:5;">x</div>
<div class="t" style="left:220.50px;top:102.85px;font-size:7px;color:#2b6cb8;font-weight:bold;font-style:normal;letter-spacing:0.000px;z-index:5;">2</div>
<div class="t" style="left:234.50px;top:95.75px;font-size:13px;color:#555;font-weight:bold;font-style:normal;letter-spacing:0.000px;z-index:5;">x</div>
<div class="t" style="left:242.50px;top:94.85px;font-size:7px;color:#2b6cb8;font-weight:bold;font-style:normal;letter-spacing:0.000px;z-index:5;">2</div>
<div class="t" style="left:111.80px;top:116.85px;font-size:17px;color:#fff;font-weight:bold;font-style:normal;letter-spacing:0.000px;z-index:5;-webkit-text-stroke:1.3px #3b72bd;">A</div>
<div class="t" style="left:143.00px;top:117.72px;font-size:9.5px;color:#444;font-weight:bold;font-style:normal;letter-spacing:0.000px;z-index:5;">ab</div>
<div class="t" style="left:180.40px;top:118.33px;font-size:13.5px;color:#555;font-weight:normal;font-style:normal;letter-spacing:0.000px;z-index:5;">A</div>
<div class="t" style="left:211.30px;top:119.00px;font-size:12px;color:#555;font-weight:normal;font-style:normal;letter-spacing:0.012px;z-index:5;">Aa</div>
<div class="t" style="left:256.60px;top:119.83px;font-size:13.5px;color:#555;font-weight:normal;font-style:normal;letter-spacing:0.000px;z-index:5;">A</div>
<div class="t" style="left:279.20px;top:122.38px;font-size:10.5px;color:#555;font-weight:normal;font-style:normal;letter-spacing:0.000px;z-index:5;">A</div>
<div class="t" style="left:172.90px;top:143.70px;font-size:11.3px;color:#262626;font-weight:normal;font-style:normal;letter-spacing:0.182px;z-index:5;">Шрифт</div>
<div class="t" style="left:391.20px;top:116.78px;font-size:9.2px;color:#3b72bd;font-weight:bold;font-style:normal;letter-spacing:0.000px;z-index:5;">А</div>
<div class="t" style="left:391.40px;top:124.58px;font-size:9.2px;color:#8a5fb0;font-weight:bold;font-style:normal;letter-spacing:0.000px;z-index:5;">Я</div>
<div class="t" style="left:361.90px;top:143.70px;font-size:11.3px;color:#262626;font-weight:normal;font-style:normal;letter-spacing:0.074px;z-index:5;">Абзац</div>
<div class="t" style="left:488.70px;top:87.95px;font-size:13px;color:#000;font-weight:normal;font-style:normal;letter-spacing:-0.378px;z-index:5;">АаБбВвГг,</div>
<div class="t" style="left:560.90px;top:87.95px;font-size:13px;color:#000;font-weight:normal;font-style:normal;letter-spacing:-0.378px;z-index:5;">АаБбВвГг,</div>
<div class="t" style="left:632.50px;top:86.02px;font-size:18.8px;color:#3579bb;font-weight:normal;font-style:normal;letter-spacing:0.000px;z-index:5;width:58.5px;overflow:hidden;letter-spacing:-0.7px;">АаБбВв</div>
<div class="t" style="left:486.40px;top:112.30px;font-size:12px;color:#555;font-weight:normal;font-style:normal;letter-spacing:0.021px;z-index:5;">¶ Обычный</div>
<div class="t" style="left:558.50px;top:112.30px;font-size:12px;color:#555;font-weight:normal;font-style:normal;letter-spacing:-0.357px;z-index:5;">¶ Без инте...</div>
<div class="t" style="left:630.90px;top:112.30px;font-size:12px;color:#555;font-weight:normal;font-style:normal;letter-spacing:-0.117px;z-index:5;">Заголово...</div>
<div class="t" style="left:575.50px;top:143.70px;font-size:11.3px;color:#262626;font-weight:normal;font-style:normal;letter-spacing:-0.387px;z-index:5;">Стили</div>
<div class="t" style="left:735.40px;top:107.10px;font-size:12px;color:#262626;font-weight:normal;font-style:normal;letter-spacing:-0.148px;z-index:5;">Редактирование</div>
<div class="t" style="left:843.50px;top:108.60px;font-size:12px;color:#262626;font-weight:normal;font-style:normal;letter-spacing:-0.243px;z-index:5;">Создать и поделиться</div>
<div class="t" style="left:873.30px;top:124.60px;font-size:12px;color:#262626;font-weight:normal;font-style:normal;letter-spacing:-0.418px;z-index:5;">Adobe PDF</div>
<div class="t" style="left:966.60px;top:108.60px;font-size:12px;color:#262626;font-weight:normal;font-style:normal;letter-spacing:0.035px;z-index:5;">Запросить</div>
<div class="t" style="left:974.10px;top:124.60px;font-size:12px;color:#262626;font-weight:normal;font-style:normal;letter-spacing:-0.138px;z-index:5;">подписи</div>
<div class="t" style="left:895.00px;top:143.70px;font-size:11.3px;color:#262626;font-weight:normal;font-style:normal;letter-spacing:0.198px;z-index:5;">Adobe Acrobat</div>
<div class="t" style="left:156.57px;top:164.50px;font-size:9.3px;color:#333;font-weight:normal;font-style:normal;letter-spacing:0.000px;z-index:5;">2</div>
<div class="t" style="left:194.34px;top:164.50px;font-size:9.3px;color:#333;font-weight:normal;font-style:normal;letter-spacing:0.000px;z-index:5;">1</div>
<div class="t" style="left:269.88px;top:164.50px;font-size:9.3px;color:#333;font-weight:normal;font-style:normal;letter-spacing:0.000px;z-index:5;">1</div>
<div class="t" style="left:307.65px;top:164.50px;font-size:9.3px;color:#333;font-weight:normal;font-style:normal;letter-spacing:0.000px;z-index:5;">2</div>
<div class="t" style="left:345.42px;top:164.50px;font-size:9.3px;color:#333;font-weight:normal;font-style:normal;letter-spacing:0.000px;z-index:5;">3</div>
<div class="t" style="left:383.19px;top:164.50px;font-size:9.3px;color:#333;font-weight:normal;font-style:normal;letter-spacing:0.000px;z-index:5;">4</div>
<div class="t" style="left:420.96px;top:164.50px;font-size:9.3px;color:#333;font-weight:normal;font-style:normal;letter-spacing:0.000px;z-index:5;">5</div>
<div class="t" style="left:458.73px;top:164.50px;font-size:9.3px;color:#333;font-weight:normal;font-style:normal;letter-spacing:0.000px;z-index:5;">6</div>
<div class="t" style="left:496.50px;top:164.50px;font-size:9.3px;color:#333;font-weight:normal;font-style:normal;letter-spacing:0.000px;z-index:5;">7</div>
<div class="t" style="left:534.27px;top:164.50px;font-size:9.3px;color:#333;font-weight:normal;font-style:normal;letter-spacing:0.000px;z-index:5;">8</div>
<div class="t" style="left:572.04px;top:164.50px;font-size:9.3px;color:#333;font-weight:normal;font-style:normal;letter-spacing:0.000px;z-index:5;">9</div>
<div class="t" style="left:607.23px;top:164.50px;font-size:9.3px;color:#333;font-weight:normal;font-style:normal;letter-spacing:0.000px;z-index:5;">10</div>
<div class="t" style="left:645.34px;top:164.50px;font-size:9.3px;color:#333;font-weight:normal;font-style:normal;letter-spacing:0.000px;z-index:5;">11</div>
<div class="t" style="left:682.77px;top:164.50px;font-size:9.3px;color:#333;font-weight:normal;font-style:normal;letter-spacing:0.000px;z-index:5;">12</div>
<div class="t" style="left:720.54px;top:164.50px;font-size:9.3px;color:#333;font-weight:normal;font-style:normal;letter-spacing:0.000px;z-index:5;">13</div>
<div class="t" style="left:758.31px;top:164.50px;font-size:9.3px;color:#333;font-weight:normal;font-style:normal;letter-spacing:0.000px;z-index:5;">14</div>
<div class="t" style="left:796.08px;top:164.50px;font-size:9.3px;color:#333;font-weight:normal;font-style:normal;letter-spacing:0.000px;z-index:5;">15</div>
<div class="t" style="left:833.85px;top:164.50px;font-size:9.3px;color:#333;font-weight:normal;font-style:normal;letter-spacing:0.000px;z-index:5;">16</div>
<div class="t" style="left:871.62px;top:164.50px;font-size:9.3px;color:#333;font-weight:normal;font-style:normal;letter-spacing:0.000px;z-index:5;">17</div>
<div class="t" style="left:909.39px;top:164.50px;font-size:9.3px;color:#333;font-weight:normal;font-style:normal;letter-spacing:0.000px;z-index:5;">18</div>
<div class="t" style="left:947.16px;top:164.50px;font-size:9.3px;color:#333;font-weight:normal;font-style:normal;letter-spacing:0.000px;z-index:5;">19</div>
<div class="t" style="left:260.60px;top:294.30px;font-size:13.3px;color:#000;font-weight:normal;font-style:normal;letter-spacing:0.000px;z-index:6;">1.</div>
<div class="t" style="left:260.60px;top:313.19px;font-size:13.3px;color:#000;font-weight:normal;font-style:normal;letter-spacing:0.000px;z-index:6;">2.</div>
<div class="t" style="left:260.30px;top:372.39px;font-size:13.3px;color:#000;font-weight:normal;font-style:normal;letter-spacing:0.000px;z-index:6;">3.</div>
<div class="t" style="left:260.00px;top:391.30px;font-size:13.3px;color:#000;font-weight:normal;font-style:normal;letter-spacing:0.000px;z-index:6;">4.</div>
<div class="t" style="left:260.30px;top:410.10px;font-size:13.3px;color:#000;font-weight:normal;font-style:normal;letter-spacing:0.000px;z-index:6;">5.</div>
<div class="t" style="left:260.50px;top:429.89px;font-size:13.3px;color:#000;font-weight:normal;font-style:normal;letter-spacing:0.000px;z-index:6;">6.</div>
<div class="t" style="left:260.60px;top:568.60px;font-size:13.3px;color:#000;font-weight:normal;font-style:normal;letter-spacing:0.000px;z-index:6;">7.</div>
<div class="t" style="left:284.70px;top:294.30px;font-size:13.3px;color:#000;font-weight:normal;font-style:normal;letter-spacing:-0.042px;z-index:6;">Могу в день по 6-7 часов тратить</div>
<div class="t" style="left:284.70px;top:313.19px;font-size:13.3px;color:#000;font-weight:normal;font-style:normal;letter-spacing:0.012px;z-index:6;">У меня нету пока постоянной работой, поэтому если мне понравится работать с Вами, то я</div>
<div class="t" style="left:284.70px;top:332.80px;font-size:13.3px;color:#000;font-weight:normal;font-style:normal;letter-spacing:0.004px;z-index:6;">обязательно останусь еще на неопределенный срок. А так для начала да посчитаем на</div>
<div class="t" style="left:284.70px;top:352.30px;font-size:13.3px;color:#000;font-weight:normal;font-style:normal;letter-spacing:-0.121px;z-index:6;">месяц.</div>
<div class="t" style="left:284.70px;top:372.39px;font-size:13.3px;color:#000;font-weight:normal;font-style:normal;letter-spacing:-0.126px;z-index:6;">Цена за час 180 рублей</div>
<div class="t" style="left:284.70px;top:391.30px;font-size:13.3px;color:#000;font-weight:normal;font-style:normal;letter-spacing:0.003px;z-index:6;">Живу в Баку, Азербайджане +1 час с Москвой (если в Москве 9:00, то в Баку 10:00)</div>
<div class="t" style="left:284.70px;top:410.10px;font-size:13.3px;color:#000;font-weight:normal;font-style:normal;letter-spacing:-0.017px;z-index:6;">+994508758647 (Вотсап и телеграм на этом номере)</div>
<div class="t" style="left:284.70px;top:429.89px;font-size:13.3px;color:#000;font-weight:normal;font-style:normal;letter-spacing:0.038px;z-index:6;">Умею говорить на 5 языках</div>
<div class="t" style="left:308.40px;top:450.10px;font-size:13.3px;color:#000;font-weight:normal;font-style:normal;letter-spacing:0.246px;z-index:6;">Азербайджанский (родной)</div>
<div class="t" style="left:308.40px;top:470.00px;font-size:13.3px;color:#000;font-weight:normal;font-style:normal;letter-spacing:0.112px;z-index:6;">Русский (второй родной)</div>
<div class="t" style="left:308.40px;top:490.10px;font-size:13.3px;color:#000;font-weight:normal;font-style:normal;letter-spacing:0.022px;z-index:6;">Немецкий (B2)</div>
<div class="t" style="left:308.40px;top:510.00px;font-size:13.3px;color:#000;font-weight:normal;font-style:normal;letter-spacing:0.048px;z-index:6;">Английский (B2)</div>
<div class="t" style="left:308.40px;top:530.00px;font-size:13.3px;color:#000;font-weight:normal;font-style:normal;letter-spacing:-0.043px;z-index:6;">Турецкий (C1)</div>
<div class="t" style="left:284.70px;top:568.60px;font-size:13.3px;color:#000;font-weight:normal;font-style:normal;letter-spacing:0.043px;z-index:6;">Я выучился в колледже туризма в Австрии и 3 года прожил там, узнав очень много о</div>
<div class="t" style="left:284.70px;top:588.20px;font-size:13.3px;color:#000;font-weight:normal;font-style:normal;letter-spacing:0.048px;z-index:6;">маркетинге, туризме и многого того чего нету в наших странах СНГ. Имею большой опыт в</div>
<div class="t" style="left:284.70px;top:607.20px;font-size:13.3px;color:#000;font-weight:normal;font-style:normal;letter-spacing:0.049px;z-index:6;">использование ПК.  Для меня нет трудностей что-то изменить в моем компе, установить,</div>
<div class="t" style="left:284.70px;top:626.29px;font-size:13.3px;color:#000;font-weight:normal;font-style:normal;letter-spacing:0.085px;z-index:6;">удалить, форматнуть, большой опыт в использование программ от Microsoft Office. Также,</div>
<div class="t" style="left:284.70px;top:646.00px;font-size:13.3px;color:#000;font-weight:normal;font-style:normal;letter-spacing:-0.053px;z-index:6;">я начинающий фрилансер. Есть много заказов на сайте Kwork. Я чуть больше месяца как</div>
<div class="t" style="left:284.70px;top:665.29px;font-size:13.3px;color:#000;font-weight:normal;font-style:normal;letter-spacing:0.036px;z-index:6;">вернулся из армии, и под конец своей службы я четко поставил перед собой цель стать</div>
<div class="t" style="left:284.70px;top:684.00px;font-size:13.3px;color:#000;font-weight:normal;font-style:normal;letter-spacing:0.011px;z-index:6;">профессиональным фрилансером, всегда мечтал работать удаленно из своего дома.</div>
<div class="t" style="left:284.70px;top:703.70px;font-size:13.3px;color:#000;font-weight:normal;font-style:normal;letter-spacing:0.057px;z-index:6;">Специально для этого я купил себе мощный ноутбук, чтобы была возможность изучить</div>
<div class="t" style="left:284.70px;top:723.00px;font-size:13.3px;color:#000;font-weight:normal;font-style:normal;letter-spacing:0.119px;z-index:6;">графические программы, монтажировать видео и тд. Моё хобби это комп. Я обожаю</div>
<div class="t" style="left:6.60px;top:737.42px;font-size:11.5px;color:#444;font-weight:normal;font-style:normal;letter-spacing:-0.200px;z-index:11;">Страница 1 из 1</div>
<div class="t" style="left:111.00px;top:737.42px;font-size:11.5px;color:#444;font-weight:normal;font-style:normal;letter-spacing:-0.304px;z-index:11;">Число слов: 391</div>
<div class="t" style="left:245.60px;top:737.42px;font-size:11.5px;color:#444;font-weight:normal;font-style:normal;letter-spacing:-0.064px;z-index:11;">русский</div>
<div class="t" style="left:1042.00px;top:737.42px;font-size:11.5px;color:#444;font-weight:normal;font-style:normal;letter-spacing:-0.652px;z-index:11;">100 %</div>
</body></html>
